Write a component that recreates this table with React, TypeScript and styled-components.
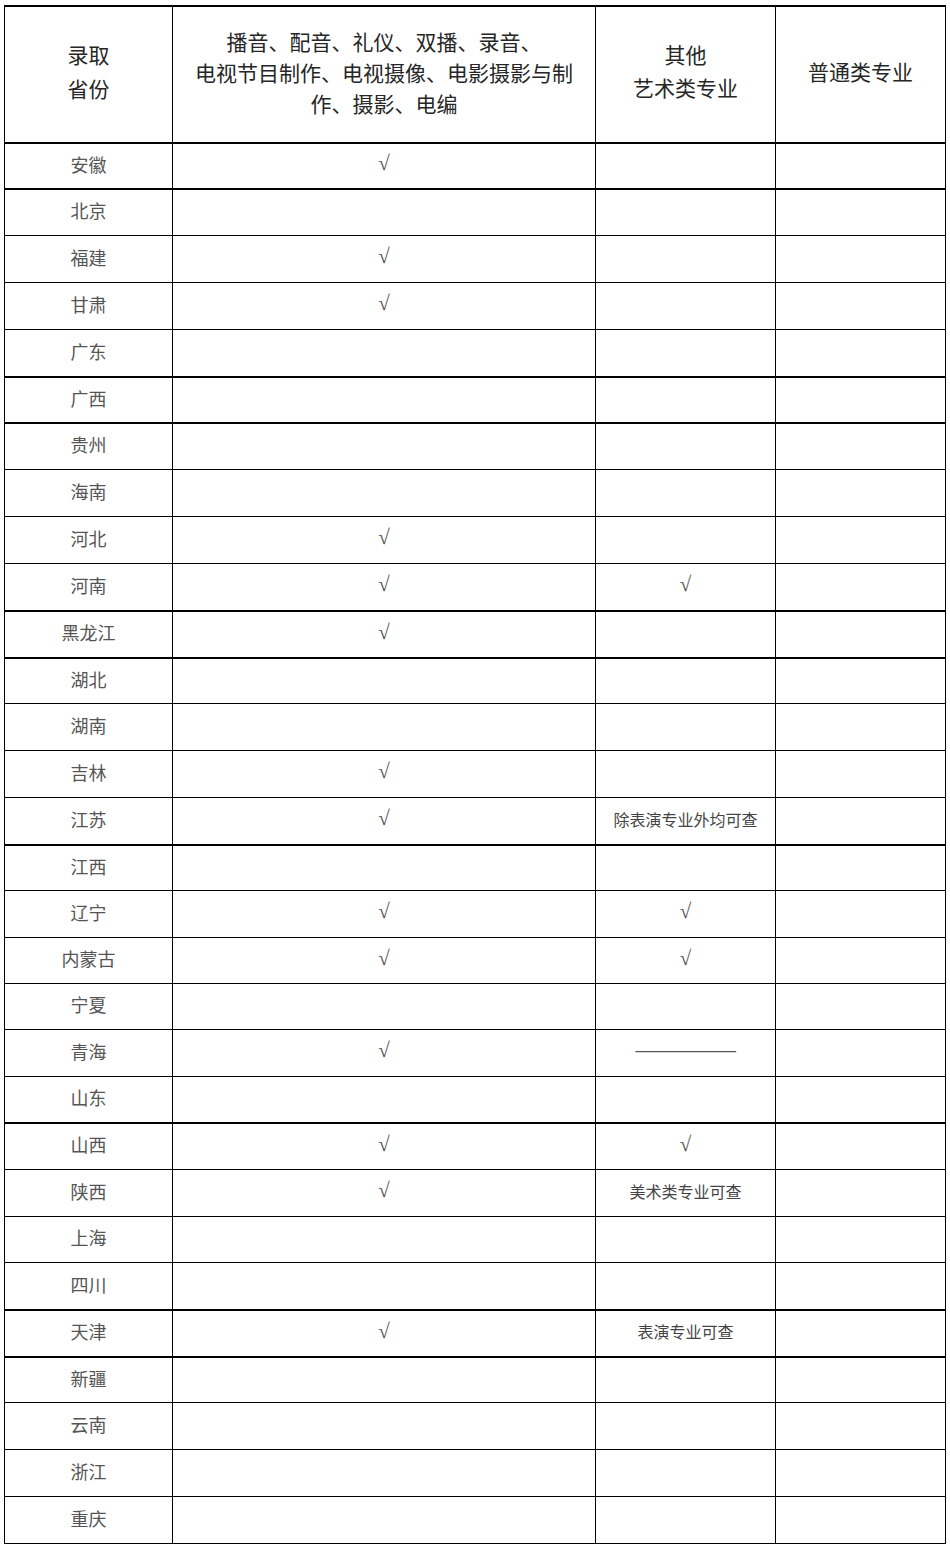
import React from "react";
import styled, { createGlobalStyle } from "styled-components";

const GlobalStyle = createGlobalStyle`
  html, body { margin: 0; padding: 0; background: #ffffff; }
  * { box-sizing: border-box; }
`;

const Table = styled.div`
  margin: 5px 0 0 4px;
  width: 942px;
  border-bottom: 1px solid #000;
  font-family: "Noto Sans CJK SC", "Noto Sans", sans-serif;
`;

const Row = styled.div<{ $h: number; $thick: boolean }>`
  display: grid;
  grid-template-columns: 168px 423px 180px 171px;
  height: ${(p) => p.$h}px;
  border-top: ${(p) => (p.$thick ? 2 : 1)}px solid #000;
`;

const Cell = styled.div<{ $last?: boolean; $lift?: number }>`
  display: flex;
  align-items: center;
  justify-content: center;
  text-align: center;
  padding-bottom: ${(p) => p.$lift ?? 5}px;
  border-left: 1px solid #000;
  ${(p) => (p.$last ? "border-right: 1px solid #000;" : "")}
`;

const HeadText = styled.div<{ $lh: number }>`
  font-size: 21px;
  line-height: ${(p) => p.$lh}px;
  color: #262626;
`;

const Province = styled.span`
  font-size: 18px;
  color: #555;
`;

const Check = styled.span`
  font-family: "Liberation Serif", "DejaVu Serif", serif;
  font-size: 21px;
  line-height: 1;
  color: #555;
`;

const Note = styled.span`
  font-size: 16px;
  color: #444;
`;

const Dash = styled.span`
  font-family: "Liberation Sans", sans-serif;
  font-size: 17px;
  color: #555;
  letter-spacing: -0.3px;
`;

type Mark = "" | "check" | "dash" | string;

interface RowData {
  name: string;
  c2: boolean;
  c3: Mark;
}

const data: RowData[] = [
  { name: "安徽", c2: true, c3: "" },
  { name: "北京", c2: false, c3: "" },
  { name: "福建", c2: true, c3: "" },
  { name: "甘肃", c2: true, c3: "" },
  { name: "广东", c2: false, c3: "" },
  { name: "广西", c2: false, c3: "" },
  { name: "贵州", c2: false, c3: "" },
  { name: "海南", c2: false, c3: "" },
  { name: "河北", c2: true, c3: "" },
  { name: "河南", c2: true, c3: "check" },
  { name: "黑龙江", c2: true, c3: "" },
  { name: "湖北", c2: false, c3: "" },
  { name: "湖南", c2: false, c3: "" },
  { name: "吉林", c2: true, c3: "" },
  { name: "江苏", c2: true, c3: "除表演专业外均可查" },
  { name: "江西", c2: false, c3: "" },
  { name: "辽宁", c2: true, c3: "check" },
  { name: "内蒙古", c2: true, c3: "check" },
  { name: "宁夏", c2: false, c3: "" },
  { name: "青海", c2: true, c3: "dash" },
  { name: "山东", c2: false, c3: "" },
  { name: "山西", c2: true, c3: "check" },
  { name: "陕西", c2: true, c3: "美术类专业可查" },
  { name: "上海", c2: false, c3: "" },
  { name: "四川", c2: false, c3: "" },
  { name: "天津", c2: true, c3: "表演专业可查" },
  { name: "新疆", c2: false, c3: "" },
  { name: "云南", c2: false, c3: "" },
  { name: "浙江", c2: false, c3: "" },
  { name: "重庆", c2: false, c3: "" },
];

const bounds = [
  142, 188, 235, 282, 329, 376, 422, 469, 516, 563, 610, 657, 703, 750, 797,
  844, 890, 937, 983, 1029, 1076, 1122, 1169, 1216, 1262, 1309, 1356, 1402,
  1449, 1496, 1543,
];

const thickTops = new Set([142, 188, 376, 422, 610, 657, 844, 1122, 1309, 1356]);

function renderC3(v: Mark) {
  if (v === "") return null;
  if (v === "check") return <Check>√</Check>;
  if (v === "dash") return <Dash>——————</Dash>;
  return <Note>{v}</Note>;
}

export default function App() {
  return (
    <>
      <GlobalStyle />
      <Table>
        <Row $h={137} $thick>
          <Cell $lift={8}>
            <HeadText $lh={34}>
              录取
              <br />
              省份
            </HeadText>
          </Cell>
          <Cell $lift={5}>
            <HeadText $lh={31}>
              播音、配音、礼仪、双播、录音、
              <br />
              电视节目制作、电视摄像、电影摄影与制
              <br />
              作、摄影、电编
            </HeadText>
          </Cell>
          <Cell $lift={8}>
            <HeadText $lh={33}>
              其他
              <br />
              艺术类专业
            </HeadText>
          </Cell>
          <Cell $last $lift={6}>
            <HeadText $lh={33}>普通类专业</HeadText>
          </Cell>
        </Row>
        {data.map((r, i) => (
          <Row
            key={r.name}
            $h={bounds[i + 1] - bounds[i]}
            $thick={thickTops.has(bounds[i])}
          >
            <Cell>
              <Province>{r.name}</Province>
            </Cell>
            <Cell>{r.c2 ? <Check>√</Check> : null}</Cell>
            <Cell>{renderC3(r.c3)}</Cell>
            <Cell $last />
          </Row>
        ))}
      </Table>
    </>
  );
}
